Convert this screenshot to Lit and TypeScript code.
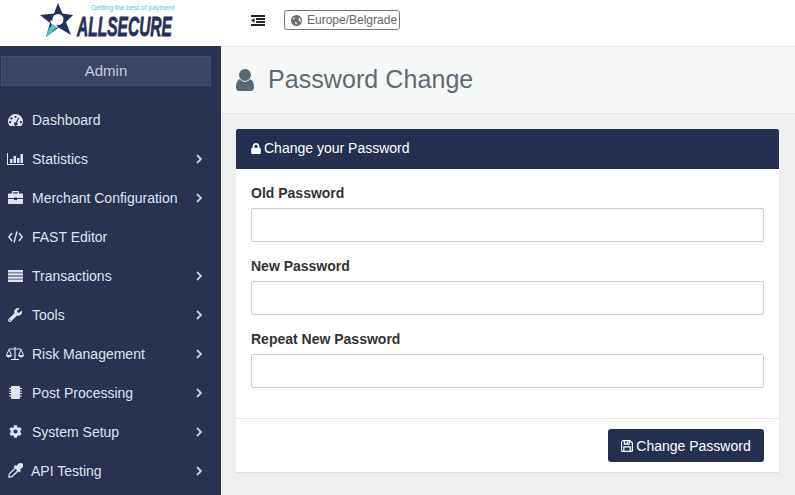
import { LitElement, html, css, svg } from "lit";
import { customElement } from "lit/decorators.js";

const solid = (vb: string, d: string, cls = "ic") =>
  html`<svg class=${cls} viewBox=${vb} fill="currentColor" fill-rule="evenodd"><path d=${d}></path></svg>`;

const USER = "M9 0a6 6 0 1 1 0 12A6 6 0 0 1 9 0zM0 18.500c0-4.500 1.200-7.800 3.800-8.300C5.100 11.700 7 12.800 9 12.800s3.900-1.100 5.200-2.600c2.600.5 3.800 3.800 3.800 8.300 0 2.200-1.300 3.500-3.200 3.500H3.200C1.300 22 0 20.700 0 18.500z";
const LOCK = "M400 224h-24v-72C376 68.2 307.8 0 224 0S72 68.2 72 152v72H48c-26.5 0-48 21.5-48 48v192c0 26.5 21.5 48 48 48h352c26.5 0 48-21.5 48-48V272c0-26.5-21.5-48-48-48zm-104 0H152v-72c0-39.7 32.3-72 72-72s72 32.3 72 72v72z";
const WRENCH = "M507.73 109.1c-2.24-9.03-13.54-12.09-20.12-5.51l-74.36 74.36-67.88-11.31-11.31-67.88 74.36-74.36c6.62-6.62 3.43-17.9-5.66-20.16-47.38-11.74-99.55.91-136.58 37.93-39.64 39.64-50.55 97.1-34.05 147.2L18.74 402.76c-24.99 24.99-24.99 65.51 0 90.5 24.99 24.99 65.51 24.99 90.5 0l213.21-213.21c50.12 16.71 107.47 5.68 147.37-34.22 37.07-37.07 49.7-89.32 37.91-136.73zM64 472c-13.25 0-24-10.75-24-24 0-13.26 10.75-24 24-24s24 10.74 24 24c0 13.25-10.75 24-24 24z";
const COG = "M487.4 315.7l-42.6-24.6c4.3-23.2 4.3-47 0-70.2l42.6-24.6c4.9-2.8 7.1-8.6 5.5-14-11.1-35.6-30-67.8-54.7-94.6-3.8-4.1-10-5.1-14.8-2.3L380.8 110c-17.9-15.4-38.5-27.3-60.8-35.1V25.8c0-5.6-3.9-10.5-9.4-11.7-36.7-8.2-74.3-7.8-109.2 0-5.5 1.2-9.4 6.1-9.4 11.7V75c-22.2 7.9-42.8 19.8-60.8 35.1L88.7 85.5c-4.9-2.8-11-1.9-14.8 2.3-24.7 26.7-43.6 58.9-54.7 94.6-1.7 5.4.6 11.2 5.5 14L67.3 221c-4.3 23.2-4.3 47 0 70.2l-42.6 24.6c-4.9 2.8-7.1 8.6-5.5 14 11.1 35.6 30 67.8 54.7 94.6 3.8 4.1 10 5.1 14.8 2.3l42.6-24.6c17.9 15.4 38.5 27.3 60.8 35.1v49.2c0 5.6 3.9 10.5 9.4 11.7 36.7 8.2 74.3 7.8 109.2 0 5.5-1.2 9.4-6.1 9.4-11.7v-49.2c22.2-7.9 42.8-19.8 60.8-35.1l42.6 24.6c4.9 2.8 11 1.9 14.8-2.3 24.7-26.7 43.6-58.9 54.7-94.6 1.5-5.5-.7-11.3-5.6-14.1zM256 336c-44.1 0-80-35.9-80-80s35.900-80 80-80 80 35.900 80 80-35.900 80-80 80z";
const GAUGE = "M7.500 0A7.500 7.500 0 0 0 0 7.500c0 1.400.4 2.700 1.100 3.800.2.400.5.700.9.700h11c.4 0 .7-.3.900-.7.700-1.100 1.100-2.400 1.100-3.800A7.500 7.500 0 0 0 7.500 0zM7.500 1.700a1.100 1.100 0 1 1 0 2.200 1.100 1.100 0 0 1 0-2.200zM3.500 3.300a1.100 1.100 0 1 1 0 2.200 1.100 1.100 0 0 1 0-2.200zM2.100 7.100a1.100 1.100 0 1 1 0 2.200 1.100 1.100 0 0 1 0-2.200zm10.800 0a1.100 1.100 0 1 1 0 2.200 1.100 1.100 0 0 1 0-2.200zM10.300 3.500l1 .4-2.400 4.800a1.700 1.700 0 1 1-1-.4l2.400-4.800z";
const BARS = "M0 0h1v11h16v1H0V0zm3 6h2.500v4H3V6zm3.500-3H9v7H6.500V3zm3.500 2h2.500v5H10V5zm3.500-4H16v9h-2.500V1z";
const CASE = "M5 0h5c.6 0 1 .4 1 1v1.500h3c.6 0 1 .4 1 1v3.600H9V6.500H6v.6H0V3.500c0-.6.4-1 1-1h3V1c0-.6.4-1 1-1zm.2 1.200v1.300h4.600V1.200H5.200zM0 8.100h6v1h3v-1h6V12c0 .6-.4 1-1 1H1c-.6 0-1-.4-1-1V8.100z";
const LIST = "M0 0h15v2.400H0V0zm0 3.200h15v2.400H0V3.200zm0 3.200h15v2.400H0V6.400zm0 3.200h15V12H0V9.600z";
const SCALE = "M8.400 0h1.200v1.500H15l.5.900L18 8c0 1.500-1.300 2.400-2.900 2.400S12.200 9.500 12.200 8l2.300-5.400h-4.900V12h3.500v1H4.900v-1h3.500V2.600H3.500L5.800 8c0 1.500-1.300 2.400-2.900 2.400S0 9.500 0 8l2.500-5.600.5-.9h5.400V0zM2.900 3.800L1.100 8h3.600L2.900 3.800zm12.200 0L13.300 8h3.600l-1.800-4.200z";
const CHIP = "M3 0h7c.6 0 1 .4 1 1v1h2v1h-2v1.500h2v1h-2V7h2v1h-2v1.500h2v1h-2V12c0 .6-.4 1-1 1H3c-.6 0-1-.4-1-1v-1.500H0v-1h2V8H0V7h2V5.500H0v-1h2V3H0V2h2V1c0-.6.400-1 1-1z";
const DROPPER = "M14.400.8c-1.200-1.200-2.900-1.100-4 0L8.200 3 7.300 2.100 5.600 3.800l1 1L.9 10.500c-.3.300-.4.700-.4 1.100v1.300L0 14 1.100 15l1.100-.5h1.300c.4 0 .8-.1 1.100-.4l5.700-5.700 1 1 1.700-1.700-.9-.9 2.300-2.300c1.100-1.100 1.100-2.900 0-4.200zM3.300 13.300H1.700v-1.700L7.500 5.800l1.700 1.700-5.900 5.800z";
const INDENT = "M0 0h14v2H0V0zm5 3h9v2H5V3zm0 3h9v2H5V6zM0 9h14v2H0V9zM0 5.500L3.500 3v5L0 5.500z";
const GLOBE = "M8 0a8 8 0 1 0 0 16A8 8 0 0 0 8 0zM12 3.500l2 2.500.5 3-1.500 1-1.500-1.500-.5-2.500.5-2.500zM4 3.500l1.500.5-1 2-2 .5.500-1.500 1-1.500zM6 9.500l2 .5.500 2-1 2-1-1-.5-3.500z";

type Item = [string, any, boolean, string?];
const items: Item[] = [
  ["Dashboard", solid("0 0 15 12", GAUGE, "ic i15"), false],
  ["Statistics", solid("0 0 17 12", BARS, "ic i17"), true],
  ["Merchant Configuration", solid("0 0 15 13", CASE, "ic i15 h13"), true],
  ["FAST Editor", html`<svg class="ic i15" viewBox="0 0 15 12" fill="none" stroke="currentColor" stroke-width="1.400"><path d="M4 2 .9 6 4 10M11 2l3.100 4L11 10M9 .5l-3 11"></path></svg>`, false],
  ["Transactions", solid("0 0 15 12", LIST, "ic i15"), true],
  ["Tools", solid("0 0 512 512", WRENCH, "ic i14"), true],
  ["Risk Management", solid("0 0 18 13", SCALE, "ic i18"), true],
  ["Post Processing", solid("0 0 13 13", CHIP, "ic i13"), true],
  ["System Setup", solid("0 0 512 512", COG, "ic i13"), true],
  ["API Testing", solid("0 0 15 15", DROPPER, "ic i15 h15"), true, "tight"],
];

const logo = html`<svg class="logo" viewBox="0 0 140 46" width="140" height="46">
  ${svg`
  <path fill="#27325a" d="M19 3l4.500 10.500L34 15l-7 7 5 13-12.500-7.500L7 37l4-14L1 15l14-1.500z"></path>
  <circle cx="19" cy="19.500" r="5.500" fill="#fff"></circle>
  <path fill="#fff" d="M11 21l3-1 5 7-4 2z"></path>
  <path fill="#55c3d6" d="M13.500 24l4.500 3-8 8-3 2 2.500-7.500z"></path>
  <text x="52" y="10" font-family="Liberation Sans, sans-serif" font-size="6.800" fill="#59bfe6">Getting the best of payment</text>
  <text transform="translate(38 36) scale(.565 1)" font-family="Liberation Sans, sans-serif" font-size="27.500" font-weight="700" font-style="italic" fill="#27325a" stroke="#27325a" stroke-width=".8">ALLSECURE</text>
  `}
</svg>`;

@customElement("app-root")
export class AppRoot extends LitElement {
  static styles = css`
    :host {
      display: block;
      width: 795px;
      height: 495px;
      overflow: hidden;
      font-family: "Liberation Sans", Arial, sans-serif;
      font-size: 14px;
      color: #333;
      background: #eef0f0;
    }
    .ic { display: block; width: 16px; height: 16px; flex: none; }
    .top {
      height: 46px;
      background: #fff;
      display: flex;
      align-items: center;
      box-sizing: border-box;
      padding-bottom: 6px;
    }
    .logo { margin-left: 39px; flex: none; align-self: flex-start; }
    .indent { width: 14px; height: 11px; margin-left: 72px; color: #262626; flex: none; }
    .tz {
      margin-left: 19px;
      height: 20px;
      box-sizing: border-box;
      border: 1px solid #777;
      border-radius: 3px;
      display: flex;
      align-items: center;
      gap: 5px;
      padding: 0 2px 0 6px;
      font-size: 12px;
      color: #666;
    }
    .tz .ic { width: 11px; height: 11px; color: #6e6e6e; }
    .row { display: flex; height: 449px; }
    .side {
      width: 221px;
      flex: none;
      background: #29324f;
      color: #dfe3ee;
      box-sizing: border-box;
      padding-top: 10px;
    }
    .admin {
      margin: 0 10px 0 1px;
      height: 30px;
      box-sizing: border-box;
      border: 1px solid #454e6e;
      background: #3b4463;
      color: #c5cce0;
      text-align: center;
      line-height: 28px;
      font-size: 15px;
    }
    .menu { list-style: none; margin: 14px 0 0; padding: 0; }
    .menu li {
      height: 39px;
      display: flex;
      align-items: center;
      padding-left: 6px;
      padding-right: 19px;
    }
    .cell { width: 18px; margin-right: 8px; display: flex; justify-content: center; flex: none; }
    .i13 { width: 13px; height: 13px; }
    .i14 { width: 14px; height: 14px; }
    .i15 { width: 15px; height: 12px; }
    .i17 { width: 17px; height: 12px; }
    .i18 { width: 18px; height: 13px; }
    .h13 { height: 13px; }
    .h15 { height: 15px; }
    .menu span { flex: 1; white-space: nowrap; }
    .menu span.tight { margin-left: -1px; }
    .chev { width: 6px; height: 10px; flex: none; color: #c9cedd; }
    .main { flex: 1; min-width: 0; }
    .phead {
      height: 66px;
      background: #f6f8f8;
      border-bottom: 1px solid #e2e5e5;
      border-top: 1px solid #ececec;
      display: flex;
      align-items: center;
      padding-left: 15px;
      gap: 14px;
    }
    .phead .ic { width: 18px; height: 22px; color: #5a6872; }
    .phead h1 { margin: 0 0 2px; font-weight: 400; font-size: 25px; letter-spacing: .07px; color: #5f6a72; }
    .card {
      margin: 15px 16px 0 15px;
      background: #fff;
      box-shadow: 0 1px 1px rgba(0, 0, 0, .06);
    }
    .chead {
      height: 40px;
      box-sizing: border-box;
      padding: 0 0 2px 15px;
      background: #253050;
      color: #fff;
      display: flex;
      align-items: center;
      gap: 3px;
      border-radius: 2px 2px 0 0;
    }
    .chead .ic { width: 10px; height: 11px; }
    .cbody { padding: 14px 15px 30px; border-bottom: 1px solid #e6e8e8; }
    .field { display: block; margin-bottom: 14px; }
    .field:last-child { margin-bottom: 0; }
    .field b { display: block; line-height: 20px; margin-bottom: 5px; color: #333; }
    .field input {
      display: block;
      width: 100%;
      height: 34px;
      box-sizing: border-box;
      border: 1px solid #ccc;
      border-radius: 2px;
      background: #fff;
      padding: 6px 12px;
      outline: none;
    }
    .cfoot { padding: 10px 15px; display: flex; justify-content: flex-end; }
    .btn {
      height: 33px;
      width: 156px;
      border: none;
      border-radius: 3px;
      background: #253050;
      color: #fff;
      font: inherit;
      display: flex;
      align-items: center;
      justify-content: center;
      gap: 3px;
      padding: 0;
    }
    .btn .ic { width: 12px; height: 12px; }
  `;

  render() {
    return html`
      <header class="top">
        ${logo}
        ${solid("0 0 14 11", INDENT, "indent")}
        <div class="tz">${solid("0 0 16 16", GLOBE)}Europe/Belgrade</div>
      </header>
      <div class="row">
        <nav class="side">
          <div class="admin">Admin</div>
          <ul class="menu">
            ${items.map(([label, icon, more, cls]) => html`<li>
              <div class="cell">${icon}</div><span class=${cls ?? ""}>${label}</span>
              ${more ? html`<svg class="chev" viewBox="0 0 6 10" fill="none" stroke="currentColor" stroke-width="1.800"><path d="M1 1l4 4-4 4"></path></svg>` : ""}
            </li>`)}
          </ul>
        </nav>
        <main class="main">
          <div class="phead">
            ${solid("0 0 18 22", USER)}
            <h1>Password Change</h1>
          </div>
          <section class="card">
            <div class="chead">${solid("0 0 448 512", LOCK)}Change your Password</div>
            <div class="cbody">
              ${["Old Password", "New Password", "Repeat New Password"].map(
                (l) => html`<label class="field"><b>${l}</b><input type="password" /></label>`
              )}
            </div>
            <div class="cfoot">
              <button class="btn">
                <svg class="ic" viewBox="0 0 16 16" fill="none" stroke="currentColor" stroke-width="1.600"><path d="M1.500.8h10.300l3.400 3.200v10c0 .7-.5 1.200-1.200 1.200H2c-.7 0-1.200-.5-1.200-1.200V1.500M4.500 1v4.500h6.500V1M3.800 15V9.200h8.400V15M8.500 2v2.500"></path></svg>
                Change Password
              </button>
            </div>
          </section>
        </main>
      </div>
    `;
  }
}
